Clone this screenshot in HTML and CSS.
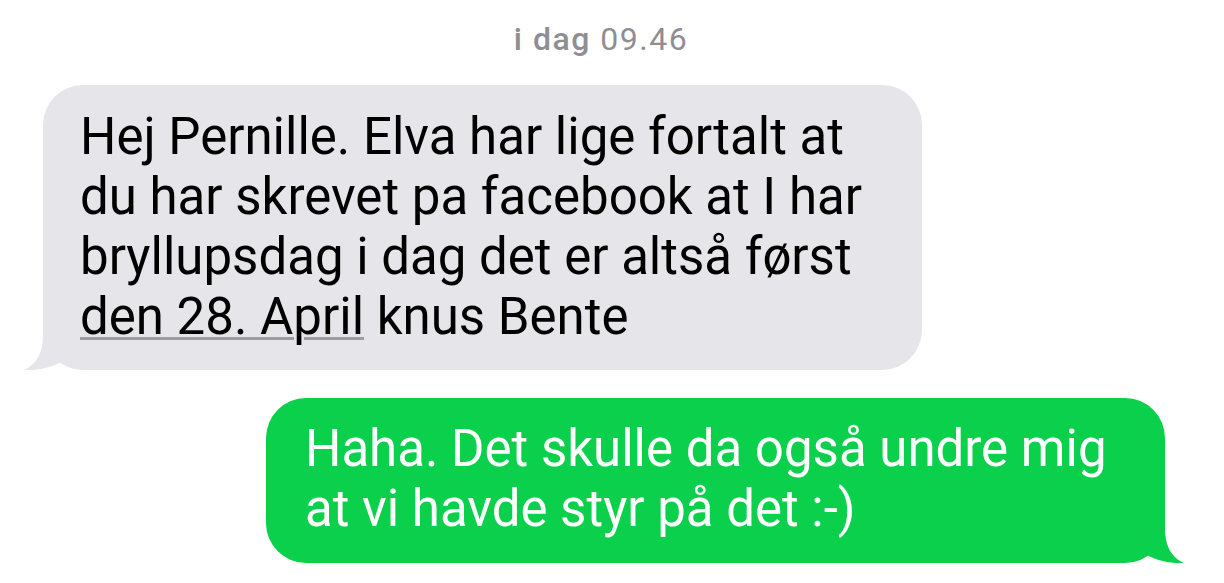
FILE: index.html
```html
<!DOCTYPE html>
<html lang="da">
<head>
<meta charset="utf-8">
<link rel="stylesheet" href="styles.css">
</head>
<body>
<div class="thread">
  <div class="stamp"><b>i dag</b> 09.46</div>
  <div class="row in">
    <div class="bubble grey">
      <svg class="tail" viewBox="0 0 80 45" width="80" height="45"><path d="M20,0 L20,10 C20,30 12,40 1,45 C15,46 30,42 40,36 C48,42 58,45 75,45 L80,45 L80,0 Z"/></svg>
      <p class="msg">Hej Pernille. Elva har lige fortalt at<br>du har skrevet pa facebook at I har<br>bryllupsdag i dag det er altså først<br><span class="link">den 28. April</span> knus Bente</p>
    </div>
  </div>
  <div class="row out">
    <div class="bubble green">
      <svg class="tail" viewBox="0 0 80 45" width="80" height="45"><path d="M20,0 L20,10 C20,30 12,40 1,45 C15,46 30,42 40,36 C48,42 58,45 75,45 L80,45 L80,0 Z"/></svg>
      <p class="msg">Haha. Det skulle da også undre mig<br>at vi havde styr på det :-)</p>
    </div>
  </div>
</div>
</body>
</html>
```
FILE: styles.css
```css
html, body {
  margin: 0;
  padding: 0;
  background: #ffffff;
}
.thread {
  width: 1224px;
  height: 583px;
  overflow: hidden;
  font-family: Roboto, "Liberation Sans", sans-serif;
  display: flex;
  flex-direction: column;
}
.stamp {
  text-align: center;
  color: #8e8e93;
  font-size: 32px;
  line-height: 36px;
  letter-spacing: 1.5px;
  padding-top: 21px;
  padding-right: 22px;
}
.stamp b {
  font-weight: 500;
}
.row {
  display: flex;
}
.row.in {
  padding-left: 43px;
  margin-top: 28px;
}
.row.out {
  justify-content: flex-end;
  padding-right: 59px;
  margin-top: 28px;
}
.bubble {
  position: relative;
  font-size: 51px;
  line-height: 60px;
  border-radius: 40px;
  box-sizing: border-box;
  white-space: nowrap;
}
.msg {
  position: relative;
  margin: 0;
}
.grey {
  background: #e5e5ea;
  color: #000;
  width: 879px;
  padding: 22px 30px 23px 37px;
}
.green {
  background: #0bd04b;
  color: #fff;
  width: 899px;
  padding: 21px 30px 24px 39px;
}
.link {
  text-decoration: underline;
  text-decoration-color: #9c9ca1;
  text-decoration-thickness: 3px;
  text-underline-offset: 3px;
}
.tail {
  position: absolute;
  bottom: 0;
  display: block;
}
.grey .tail {
  left: -20px;
  fill: #e5e5ea;
}
.green .tail {
  right: -20px;
  fill: #0bd04b;
  transform: scaleX(-1);
}
```
